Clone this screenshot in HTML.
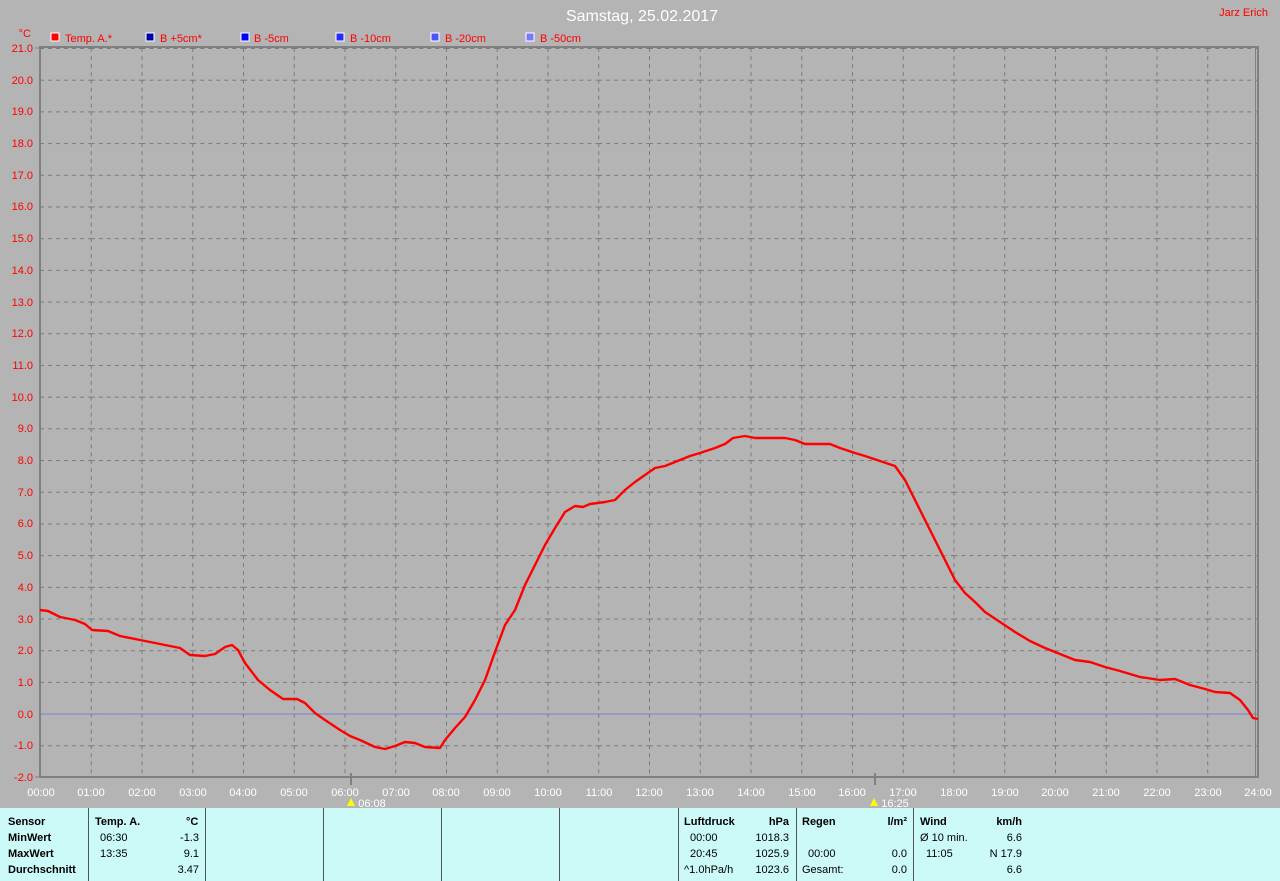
<!DOCTYPE html>
<html><head><meta charset="utf-8"><style>
body{margin:0;width:1280px;height:881px;background:#b4b4b4;overflow:hidden;position:relative;font-family:"Liberation Sans",sans-serif}
.t{position:absolute;font-size:11px;white-space:nowrap}
#panel{position:absolute;left:0;top:808px;width:1280px;height:73px;background:#ccfaf8}
.v{position:absolute;top:0;width:1px;height:73px;background:#555}
.p{position:absolute;font-size:11px;color:#000;white-space:nowrap}
.b{font-weight:bold}
</style></head><body>
<svg width="1280" height="881" style="position:absolute;left:0;top:0" font-family="Liberation Sans, sans-serif">
<defs><pattern id="g" x="40" y="48" width="50.75" height="31.696" patternUnits="userSpaceOnUse">
<line x1="0.5" y1="0" x2="0.5" y2="31.7" stroke="#7a7a7a" stroke-dasharray="4,4"/>
<line x1="0" y1="0.5" x2="50.75" y2="0.5" stroke="#7a7a7a" stroke-dasharray="4,4"/>
</pattern></defs>
<rect x="40" y="48" width="1218" height="729" fill="url(#g)"/>
<line x1="40" y1="714" x2="1258" y2="714" stroke="#7f7fd8" stroke-width="1"/>
<rect x="40" y="47" width="1218" height="730" fill="none" stroke="#808080" stroke-width="2"/>
<line x1="1255.5" y1="47" x2="1255.5" y2="777" stroke="#808080"/>
<g stroke="#808080"><line x1="35" y1="48" x2="40" y2="48"/><line x1="35" y1="777" x2="40" y2="777"/>
<line x1="351" y1="773" x2="351" y2="785" stroke-width="2"/><line x1="875" y1="773" x2="875" y2="785" stroke-width="2"/></g>
<polyline fill="none" stroke="#f00" stroke-width="2.4" stroke-linejoin="round" points="40,610 48,611 60,617 75,620 85,624 92,630 108,631 120,636 140,640 160,644 180,648 190,655 205,656 215,654 225,647 232,645 238,650 245,663 258,680 270,690 283,699 297,699 305,703 315,713 325,720 340,730 350,736 360,740 375,747 385,749 395,746 405,742 415,743 425,747 440,748 445,740 455,728 465,717 475,700 485,680 495,652 505,625 515,610 525,585 535,565 545,545 555,528 565,512 575,506 583,507 590,504 605,502 615,500 625,490 635,482 645,475 655,468 665,466 680,460 690,456 700,453 715,448 725,444 733,438 745,436 755,438 770,438 785,438 795,440 805,444 815,444 830,444 840,448 855,453 865,456 880,461 895,466 905,480 915,500 925,520 935,540 945,560 955,580 965,593 975,602 985,612 1000,622 1015,632 1030,641 1045,648 1060,654 1075,660 1090,662 1105,667 1120,671 1140,677 1160,680 1175,679 1190,685 1205,689 1215,692 1230,693 1240,700 1248,710 1253,718 1258,719"/>
<g fill="#f00" font-size="11" text-anchor="end">
<text x="33" y="52">21.0</text><text x="33" y="84">20.0</text><text x="33" y="115">19.0</text><text x="33" y="147">18.0</text><text x="33" y="179">17.0</text><text x="33" y="210">16.0</text><text x="33" y="242">15.0</text><text x="33" y="274">14.0</text><text x="33" y="306">13.0</text><text x="33" y="337">12.0</text><text x="33" y="369">11.0</text><text x="33" y="401">10.0</text><text x="33" y="432">9.0</text><text x="33" y="464">8.0</text><text x="33" y="496">7.0</text><text x="33" y="527">6.0</text><text x="33" y="559">5.0</text><text x="33" y="591">4.0</text><text x="33" y="623">3.0</text><text x="33" y="654">2.0</text><text x="33" y="686">1.0</text><text x="33" y="718">0.0</text><text x="33" y="749">-1.0</text><text x="33" y="781">-2.0</text>
<text x="31" y="37">°C</text></g>
<g fill="#fff" font-size="11" text-anchor="middle">
<text x="41" y="796">00:00</text><text x="91" y="796">01:00</text><text x="142" y="796">02:00</text><text x="193" y="796">03:00</text><text x="243" y="796">04:00</text><text x="294" y="796">05:00</text><text x="345" y="796">06:00</text><text x="396" y="796">07:00</text><text x="446" y="796">08:00</text><text x="497" y="796">09:00</text><text x="548" y="796">10:00</text><text x="599" y="796">11:00</text><text x="649" y="796">12:00</text><text x="700" y="796">13:00</text><text x="751" y="796">14:00</text><text x="802" y="796">15:00</text><text x="852" y="796">16:00</text><text x="903" y="796">17:00</text><text x="954" y="796">18:00</text><text x="1005" y="796">19:00</text><text x="1055" y="796">20:00</text><text x="1106" y="796">21:00</text><text x="1157" y="796">22:00</text><text x="1208" y="796">23:00</text><text x="1258" y="796">24:00</text>
<text x="372" y="807">06:08</text><text x="895" y="807">16:25</text>
<text x="642" y="21" font-size="16">Samstag, 25.02.2017</text></g>
<polygon points="351,798 355,806 347,806" fill="#ff0"/><polygon points="874,798 878,806 870,806" fill="#ff0"/>
<text x="1268" y="16" fill="#f00" font-size="11" text-anchor="end">Jarz Erich</text>
<g font-size="11" fill="#f00">
<rect x="51" y="33" width="8" height="8" fill="#f00" stroke="#fff"/><text x="65" y="42">Temp. A.*</text>
<rect x="146" y="33" width="8" height="8" fill="#0000a8" stroke="#fff"/><text x="160" y="42">B +5cm*</text>
<rect x="241" y="33" width="8" height="8" fill="#0000ff" stroke="#fff"/><text x="254" y="42">B -5cm</text>
<rect x="336" y="33" width="8" height="8" fill="#2828ff" stroke="#fff"/><text x="350" y="42">B -10cm</text>
<rect x="431" y="33" width="8" height="8" fill="#5050ff" stroke="#fff"/><text x="445" y="42">B -20cm</text>
<rect x="526" y="33" width="8" height="8" fill="#7878ff" stroke="#fff"/><text x="540" y="42">B -50cm</text>
</g>
</svg>
<div id="panel">
<div class="v" style="left:88px"></div><div class="v" style="left:205px"></div><div class="v" style="left:323px"></div><div class="v" style="left:441px"></div><div class="v" style="left:559px"></div><div class="v" style="left:678px"></div><div class="v" style="left:796px"></div><div class="v" style="left:913px"></div>
<div class="p b" style="left:8px;top:8px">Sensor</div><div class="p b" style="left:8px;top:24px">MinWert</div><div class="p b" style="left:8px;top:40px">MaxWert</div><div class="p b" style="left:8px;top:56px">Durchschnitt</div>
<div class="p b" style="left:95px;top:8px">Temp. A.</div><div class="p b" style="left:186px;top:8px">°C</div>
<div class="p" style="left:100px;top:24px">06:30</div><div class="p" style="right:1081px;top:24px">-1.3</div>
<div class="p" style="left:100px;top:40px">13:35</div><div class="p" style="right:1081px;top:40px">9.1</div>
<div class="p" style="right:1081px;top:56px">3.47</div>
<div class="p b" style="left:684px;top:8px">Luftdruck</div><div class="p b" style="right:491px;top:8px">hPa</div>
<div class="p" style="left:690px;top:24px">00:00</div><div class="p" style="right:491px;top:24px">1018.3</div>
<div class="p" style="left:690px;top:40px">20:45</div><div class="p" style="right:491px;top:40px">1025.9</div>
<div class="p" style="left:684px;top:56px">^1.0hPa/h</div><div class="p" style="right:491px;top:56px">1023.6</div>
<div class="p b" style="left:802px;top:8px">Regen</div><div class="p b" style="right:373px;top:8px">l/m²</div>
<div class="p" style="left:808px;top:40px">00:00</div><div class="p" style="right:373px;top:40px">0.0</div>
<div class="p" style="left:802px;top:56px">Gesamt:</div><div class="p" style="right:373px;top:56px">0.0</div>
<div class="p b" style="left:920px;top:8px">Wind</div><div class="p b" style="right:258px;top:8px">km/h</div>
<div class="p" style="left:920px;top:24px">Ø 10 min.</div><div class="p" style="right:258px;top:24px">6.6</div>
<div class="p" style="left:926px;top:40px">11:05</div><div class="p" style="right:258px;top:40px">N 17.9</div>
<div class="p" style="right:258px;top:56px">6.6</div>
</div>
</body></html>
